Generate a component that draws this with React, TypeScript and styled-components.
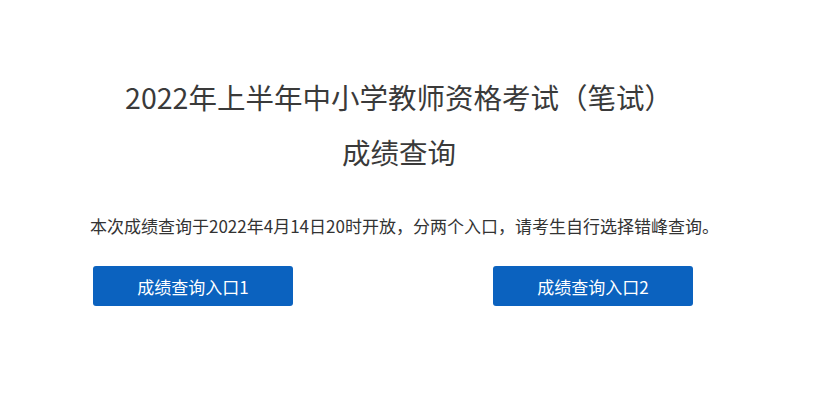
import React from "react";
import styled, { createGlobalStyle } from "styled-components";

const Global = createGlobalStyle`
  html, body { margin: 0; padding: 0; background: #ffffff; }
  body { font-family: "Noto Sans CJK SC", "Noto Sans", sans-serif; color: #333333; }
`;

const Page = styled.div`
  width: 824px;
  height: 405px;
  display: flex;
  flex-direction: column;
  padding-top: 77px;
  box-sizing: border-box;
`;

const Content = styled.div`
  width: 630px;
  margin-left: 90px;
  display: flex;
  flex-direction: column;
`;

const Title = styled.h1<{ $gap: number }>`
  margin: 0 0 ${(p) => p.$gap}px 0;
  padding-right: 12px;
  font-size: 28.5px;
  font-weight: 400;
  line-height: 40px;
  text-align: center;
  color: #3a3a3a;
`;

const Notice = styled.p`
  margin: 42px 0 0 0;
  font-size: 17px;
  line-height: 24px;
  color: #333333;
  white-space: nowrap;
`;

const ButtonRow = styled.div`
  display: flex;
  gap: 200px;
  margin-top: 28px;
  padding-left: 3px;
`;

const EntryButton = styled.a`
  display: flex;
  align-items: center;
  justify-content: center;
  width: 200px;
  height: 40px;
  background: #0b62bf;
  border-radius: 3px;
  color: #ffffff;
  font-size: 17px;
  text-decoration: none;
  cursor: pointer;
`;

export default function App() {
  return (
    <>
      <Global />
      <Page>
        <Content>
          <Title $gap={15}>2022年上半年中小学教师资格考试（笔试）</Title>
          <Title $gap={0}>成绩查询</Title>
          <Notice>本次成绩查询于2022年4月14日20时开放，分两个入口，请考生自行选择错峰查询。</Notice>
          <ButtonRow>
            <EntryButton>成绩查询入口1</EntryButton>
            <EntryButton>成绩查询入口2</EntryButton>
          </ButtonRow>
        </Content>
      </Page>
    </>
  );
}
